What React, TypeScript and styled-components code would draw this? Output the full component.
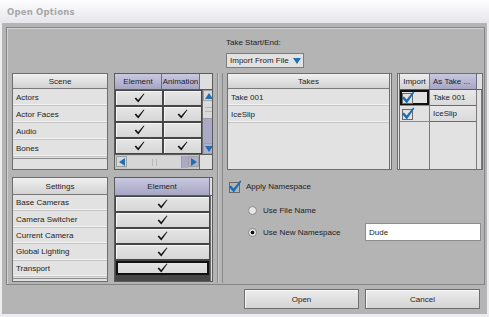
import { Fragment } from 'react';
import styled, { createGlobalStyle } from 'styled-components';

const GlobalStyle = createGlobalStyle`
  html, body {
    margin: 0;
    padding: 0;
  }
  body {
    font-family: "Liberation Sans", Arial, sans-serif;
    font-size: 8px;
    color: #1c1c1c;
  }
  #root {
    width: 489px;
    height: 317px;
    overflow: hidden;
  }
`;

type Dir = 'up' | 'down' | 'left' | 'right';

const Tri = ({ dir }: { dir: Dir }) => {
  const pts = {
    up: '0,7 4,1 8,7',
    down: '0,1 8,1 4,7',
    left: '7,0 7,8 1,4',
    right: '1,0 1,8 7,4'
  }[dir];
  return (
    <svg width="8" height="8" viewBox="0 0 8 8">
      <polygon points={pts} fill="#1f6fb2" />
    </svg>
  );
};

const Tick = () => (
  <svg width="11" height="10" viewBox="0 0 11 10">
    <path d="M0.6 5.6 L2 4.6 L4.1 7.1 L9.8 0.4 L10.4 0.9 L4.3 9.6 Z" fill="#111" />
  </svg>
);

const BlueTick = () => (
  <svg width="14" height="13" viewBox="0 0 14 13">
    <rect x="1.5" y="2.5" width="10" height="10" fill="none" stroke="#6a6a6a" />
    <path d="M1 7 L3 5.6 L5.6 8.6 L12.2 0.6 L13.4 1.4 L5.8 12.4 Z" fill="#1b6db5" />
  </svg>
);

// 씬 / 설정 목록
const sceneRows = [
  { name: 'Actors', anim: false },
  { name: 'Actor Faces', anim: true },
  { name: 'Audio', anim: false },
  { name: 'Bones', anim: true }
];

const settingsRows = [
  'Base Cameras',
  'Camera Switcher',
  'Current Camera',
  'Global Lighting',
  'Transport'
];

const takes = ['Take 001', 'IceSlip'];

export default function App() {
  return (
    <>
      <GlobalStyle />
      <Window>
        <TitleBar>
          <Title>Open Options</Title>
        </TitleBar>
        <Client>
          <Panel>
            <LeftCol>
              {/* Scene */}
              <TableRow $h={97}>
                <NameTable>
                  <GrayHead $h={15}>Scene</GrayHead>
                  {sceneRows.map((r) => (
                    <NameRow key={r.name} $h={16}>
                      {r.name}
                    </NameRow>
                  ))}
                  <NameFiller />
                </NameTable>
                <GridFrame>
                  <HeadRow>
                    <BlueHead $w={47}>Element</BlueHead>
                    <BlueHead $w={38}>Animation</BlueHead>
                    <Corner />
                  </HeadRow>
                  <GridBody>
                    <CheckGrid $cols="46px 37px" $rows={4}>
                      {sceneRows.map((r) => (
                        <Fragment key={r.name}>
                          <CheckCell>
                            <Tick />
                          </CheckCell>
                          <CheckCell>{r.anim && <Tick />}</CheckCell>
                        </Fragment>
                      ))}
                    </CheckGrid>
                    <VScroll>
                      <ArrowBox>
                        <Tri dir="up" />
                      </ArrowBox>
                      <VThumb>
                        <Grip $vertical />
                      </VThumb>
                      <Track />
                      <ArrowBox $blue>
                        <Tri dir="down" />
                      </ArrowBox>
                    </VScroll>
                  </GridBody>
                  <HScrollRow>
                    <HScroll>
                      <ArrowBox>
                        <Tri dir="left" />
                      </ArrowBox>
                      <HThumb>
                        <Grip />
                      </HThumb>
                      <Track />
                      <ArrowBox $blue>
                        <Tri dir="right" />
                      </ArrowBox>
                    </HScroll>
                    <Corner />
                  </HScrollRow>
                </GridFrame>
              </TableRow>

              {/* Settings */}
              <TableRow $h={105}>
                <NameTable>
                  <GrayHead $h={17}>Settings</GrayHead>
                  {settingsRows.map((s) => (
                    <NameRow key={s} $h={15.4}>
                      {s}
                    </NameRow>
                  ))}
                  <NameFiller />
                </NameTable>
                <GridFrame>
                  <HeadRow $h={17}>
                    <BlueHead $w={95}>Element</BlueHead>
                    <Corner $w={3} />
                  </HeadRow>
                  <GridBody>
                    <CheckGrid $cols="93px" $rows={5} $extra>
                      {settingsRows.map((s, i) => (
                        <CheckCell key={s} $focus={i === settingsRows.length - 1}>
                          <Tick />
                        </CheckCell>
                      ))}
                    </CheckGrid>
                    <SideStrip />
                  </GridBody>
                </GridFrame>
              </TableRow>
            </LeftCol>

            <Splitter />

            <RightCol>
              <Label>Take Start/End:</Label>
              <Dropdown>
                <span>Import From File</span>
                <Tri dir="down" />
              </Dropdown>

              <TakesRow>
                <TakesTable>
                  <GrayHead $h={15}>Takes</GrayHead>
                  {takes.map((t) => (
                    <NameRow key={t} $h={16}>
                      {t}
                    </NameRow>
                  ))}
                </TakesTable>

                <ImportTable>
                  <HeadRow>
                    <ImportHead $w={30}>Import</ImportHead>
                    <BlueHead $w={47} $left>
                      As Take ...
                    </BlueHead>
                    <Corner $w={6} />
                  </HeadRow>
                  <ImportBody>
                    <ImportCol $w={30}>
                      {takes.map((t, i) => (
                        <ImportCell key={t} $focus={i === 0}>
                          <BlueTick />
                        </ImportCell>
                      ))}
                    </ImportCol>
                    <ImportCol $w={47}>
                      {takes.map((t) => (
                        <AsTakeCell key={t}>{t}</AsTakeCell>
                      ))}
                    </ImportCol>
                    <ImportCol $w={6} />
                  </ImportBody>
                </ImportTable>
              </TakesRow>

              <CheckRow>
                <BlueTick />
                <span>Apply Namespace</span>
              </CheckRow>
              <RadioRow $top={12}>
                <Radio />
                <span>Use File Name</span>
              </RadioRow>
              <RadioRow $top={7}>
                <Radio $on />
                <RadioText>Use New Namespace</RadioText>
                <TextBox>Dude</TextBox>
              </RadioRow>
            </RightCol>
          </Panel>

          <ButtonRow>
            <Button>Open</Button>
            <Button>Cancel</Button>
          </ButtonRow>
        </Client>
      </Window>
    </>
  );
}

const Window = styled.div`
  width: 489px;
  height: 317px;
  display: flex;
  flex-direction: column;
  background: #ececf1;
`;

const TitleBar = styled.div`
  height: 23px;
  flex: none;
  display: flex;
  align-items: center;
  padding-left: 7px;
  background: linear-gradient(#fdfdff, #e6e6ec);
`;

const Title = styled.span`
  font-family: "DejaVu Sans", Verdana, sans-serif;
  font-weight: 700;
  font-size: 8.5px;
  color: #a6a6a6;
  letter-spacing: 0.2px;
`;

const Client = styled.div`
  flex: 1;
  margin: 0 2px 3px 2px;
  padding: 4px 2px 0 4px;
  background: #b4b4b4;
  display: flex;
  flex-direction: column;
`;

const Panel = styled.div`
  height: 258px;
  box-sizing: border-box;
  border: 1px solid #858585;
  box-shadow: inset 1px 1px 0 #d2d2d2;
  display: flex;
  padding-left: 5px;
`;

const LeftCol = styled.div`
  width: 202px;
  margin-top: 45px;
  display: flex;
  flex-direction: column;
  gap: 7px;
`;

const TableRow = styled.div<{ $h: number }>`
  height: ${(p) => p.$h}px;
  display: flex;
  gap: 6px;
`;

const NameTable = styled.div`
  width: 96px;
  box-sizing: border-box;
  border: 1px solid #6e6e6e;
  background: #e2e2e2;
  display: flex;
  flex-direction: column;
  overflow: hidden;
`;

const GrayHead = styled.div<{ $h: number }>`
  height: ${(p) => p.$h}px;
  flex: none;
  display: flex;
  align-items: center;
  justify-content: center;
  background: linear-gradient(#f0f0f0, #d2d2d2);
  border-bottom: 1px solid #7a7a7a;
  box-sizing: border-box;
`;

const NameRow = styled.div<{ $h: number }>`
  height: ${(p) => p.$h}px;
  flex: none;
  display: flex;
  align-items: center;
  padding-left: 3px;
  border-bottom: 1px solid #c4c4c4;
  box-shadow: inset 0 -1px 0 #f2f2f2;
  background: #e2e2e2;
`;

const NameFiller = styled.div`
  flex: 1;
  background: #e0e0e0;
  border-top: 1px solid #8a8a8a;
  margin-top: 1px;
`;

const GridFrame = styled.div`
  width: 99px;
  box-sizing: border-box;
  border: 1px solid #5c5c5c;
  background: #c6c6c6;
  display: flex;
  flex-direction: column;
  overflow: hidden;
`;

const HeadRow = styled.div<{ $h?: number }>`
  height: ${(p) => p.$h ?? 15}px;
  flex: none;
  display: flex;
  border-bottom: 1px solid #5c5c5c;
`;

const BlueHead = styled.div<{ $w: number; $left?: boolean }>`
  width: ${(p) => p.$w}px;
  flex: none;
  box-sizing: border-box;
  display: flex;
  align-items: center;
  justify-content: ${(p) => (p.$left ? 'flex-start' : 'center')};
  padding-left: ${(p) => (p.$left ? 3 : 0)}px;
  white-space: nowrap;
  overflow: hidden;
  background: linear-gradient(#c8c8e0, #a6a6c4);
  border-right: 1px solid #6c6c80;
`;

const ImportHead = styled(BlueHead)`
  background: linear-gradient(#eeeeee, #d0d0d0);
  border-right: 1px solid #7a7a7a;
`;

const Corner = styled.div<{ $w?: number }>`
  width: ${(p) => p.$w ?? 12}px;
  flex: 1;
  background: #dedede;
`;

const GridBody = styled.div`
  flex: 1;
  display: flex;
  min-height: 0;
`;

const CheckGrid = styled.div<{ $cols: string; $rows: number; $extra?: boolean }>`
  display: grid;
  grid-template-columns: ${(p) => p.$cols};
  grid-template-rows: repeat(${(p) => p.$rows}, 1fr) ${(p) => (p.$extra ? '4px' : '')};
  gap: 2px;
  padding: 1px 1px ${(p) => (p.$extra ? 0 : 1)}px 1px;
  background: #464646;
  flex: none;
`;

const CheckCell = styled.div<{ $focus?: boolean }>`
  display: flex;
  align-items: center;
  justify-content: center;
  background: linear-gradient(#e6e6e6, #d6d6d6);
  box-shadow: ${(p) => (p.$focus ? 'inset 0 0 0 2px #111' : 'inset 1px 1px 0 #f6f6f6')};
`;

const SideStrip = styled.div`
  flex: 1;
  background: #dedede;
  border-left: 1px solid #6c6c6c;
`;

const VScroll = styled.div`
  flex: 1;
  display: flex;
  flex-direction: column;
  border-left: 1px solid #6c6c6c;
`;

const ArrowBox = styled.div<{ $blue?: boolean }>`
  width: 11px;
  height: 11px;
  flex: none;
  display: flex;
  align-items: center;
  justify-content: center;
  background: ${(p) => (p.$blue ? '#b0b0ce' : '#d8d8d8')};
  border: 1px solid #a0a0a0;
  box-sizing: border-box;
`;

const VThumb = styled.div`
  height: 17px;
  display: flex;
  align-items: center;
  justify-content: center;
  background: #dadada;
  border-bottom: 1px solid #9c9c9c;
`;

const HThumb = styled.div`
  width: 54px;
  display: flex;
  align-items: center;
  justify-content: center;
  background: #d6d6d6;
  border-right: 1px solid #9c9c9c;
`;

const Grip = styled.div<{ $vertical?: boolean }>`
  width: ${(p) => (p.$vertical ? 7 : 3)}px;
  height: ${(p) => (p.$vertical ? 3 : 7)}px;
  border: solid #b8b8b8;
  border-width: ${(p) => (p.$vertical ? '1px 0' : '0 1px')};
`;

const Track = styled.div`
  flex: 1;
  background: #aaaac8;
`;

const HScrollRow = styled.div`
  height: 14px;
  flex: none;
  display: flex;
  border-top: 1px solid #5c5c5c;
`;

const HScroll = styled.div`
  width: 85px;
  display: flex;
  padding: 1px 0 1px 1px;
  box-sizing: border-box;
  border-right: 1px solid #6c6c6c;
  background: #c8c8c8;
`;

const Splitter = styled.div`
  width: 4px;
  margin: 45px 3px 1px 3px;
  border-left: 1px solid #8a8a8a;
  border-right: 1px solid #8a8a8a;
  box-shadow: inset 1px 0 0 #cacaca;
`;

const RightCol = styled.div`
  flex: 1;
  padding-top: 10px;
  display: flex;
  flex-direction: column;
`;

const Label = styled.div`
  height: 10px;
  line-height: 10px;
`;

const Dropdown = styled.div`
  width: 78px;
  height: 15px;
  margin-top: 5px;
  box-sizing: border-box;
  border: 1px solid #7c7c7c;
  background: #e2e2e2;
  display: flex;
  align-items: center;
  justify-content: space-between;
  padding: 0 2px 0 3px;
`;

const TakesRow = styled.div`
  height: 97px;
  margin-top: 5px;
  display: flex;
  gap: 5px;
`;

const TakesTable = styled.div`
  width: 165px;
  margin-left: 1px;
  box-sizing: border-box;
  border: 1px solid #6e6e6e;
  border-right: 3px double #6e6e6e;
  background: #e2e2e2;
  display: flex;
  flex-direction: column;
`;

const ImportTable = styled.div`
  width: 86px;
  box-sizing: border-box;
  border: 1px solid #6e6e6e;
  border-left: 3px double #6e6e6e;
  background: #e2e2e2;
  display: flex;
  flex-direction: column;
`;

const ImportBody = styled.div`
  flex: 1;
  display: flex;
`;

const ImportCol = styled.div<{ $w: number }>`
  width: ${(p) => p.$w}px;
  flex: ${(p) => (p.$w < 10 ? 1 : 'none')};
  box-sizing: border-box;
  border-right: 1px solid #7a7a7a;
  display: flex;
  flex-direction: column;
`;

const ImportCell = styled.div<{ $focus?: boolean }>`
  height: 16px;
  box-sizing: border-box;
  display: flex;
  align-items: center;
  padding-left: 1px;
  border-bottom: 1px solid #8a8a8a;
  box-shadow: ${(p) => (p.$focus ? 'inset 0 0 0 2px #111' : 'none')};
`;

const AsTakeCell = styled.div`
  height: 16px;
  box-sizing: border-box;
  display: flex;
  align-items: center;
  padding-left: 3px;
  background: linear-gradient(#e8e8e8, #dadada);
  border-bottom: 1px solid #6a6a6a;
`;

const CheckRow = styled.div`
  height: 12px;
  margin-top: 10px;
  padding-left: 2px;
  display: flex;
  align-items: center;
  gap: 4px;
`;

const RadioRow = styled.div<{ $top: number }>`
  margin-top: ${(p) => p.$top}px;
  padding-left: 22px;
  min-height: 12px;
  display: flex;
  align-items: center;
  gap: 6px;
`;

const Radio = styled.div<{ $on?: boolean }>`
  width: 9px;
  height: 9px;
  box-sizing: border-box;
  border-radius: 50%;
  border: 1px solid #8a8a8a;
  background: ${(p) =>
    p.$on ? 'radial-gradient(circle, #111 0 1.6px, #e6e6e6 2.2px)' : '#e6e6e6'};
`;

const RadioText = styled.span`
  width: 96px;
`;

const TextBox = styled.div`
  width: 116px;
  height: 18px;
  box-sizing: border-box;
  border: 1px solid #8c8c8c;
  background: #fff;
  display: flex;
  align-items: center;
  padding-left: 3px;
`;

const ButtonRow = styled.div`
  margin-top: 4px;
  padding-right: 5px;
  display: flex;
  justify-content: flex-end;
  gap: 6px;
`;

const Button = styled.button`
  width: 115px;
  height: 20px;
  font: inherit;
  color: #1c1c1c;
  border: 1px solid #6e6e6e;
  border-radius: 0;
  background: linear-gradient(#ececec, #d4d4d4);
  box-shadow: inset 1px 1px 0 #f8f8f8;
  padding: 0;
`;
